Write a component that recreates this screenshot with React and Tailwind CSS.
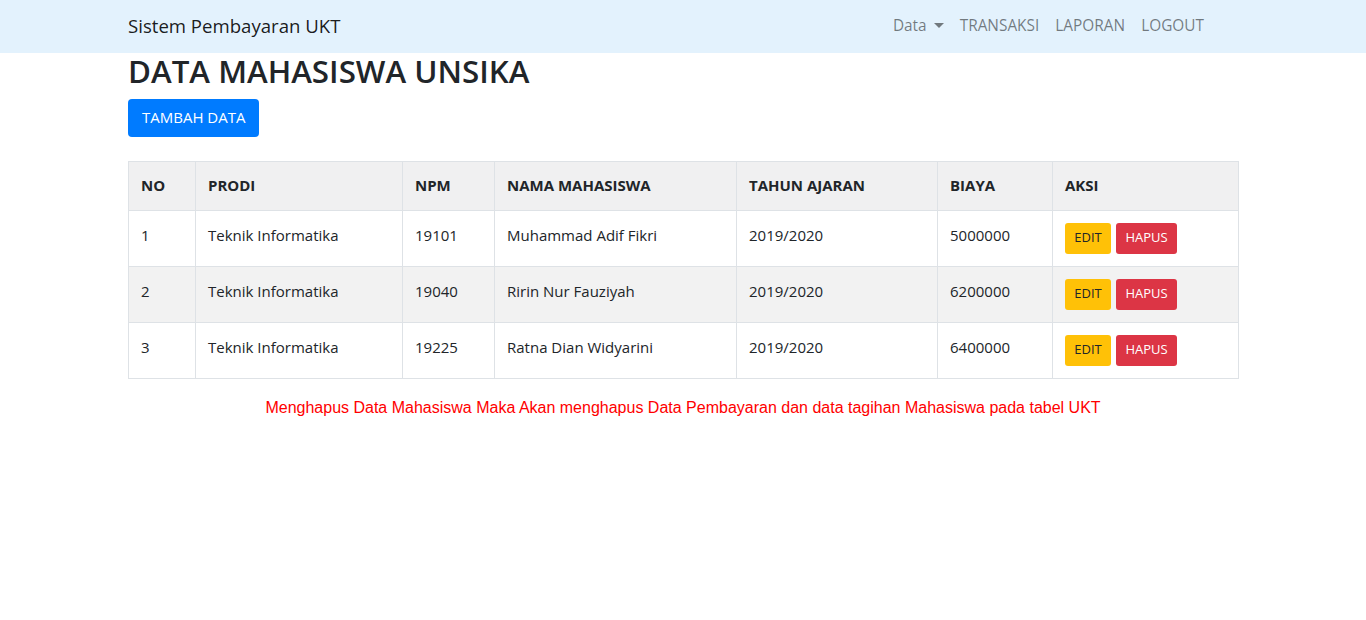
import React from "react";

const rows = [
  ["1", "Teknik Informatika", "19101", "Muhammad Adif Fikri", "2019/2020", "5000000"],
  ["2", "Teknik Informatika", "19040", "Ririn Nur Fauziyah", "2019/2020", "6200000"],
  ["3", "Teknik Informatika", "19225", "Ratna Dian Widyarini", "2019/2020", "6400000"],
];

const heads = ["NO", "PRODI", "NPM", "NAMA MAHASISWA", "TAHUN AJARAN", "BIAYA", "AKSI"];
const widths = [67, 207, 92, 242, 201, 115, 186];

export default function App() {
  return (
    <div className="min-h-[620px] bg-white text-[#212529]" style={{ fontFamily: '"Open Sans", "Noto Sans", sans-serif' }}>
      <nav className="bg-[#e3f2fd] h-[53px]">
        <div className="w-[1110px] mx-auto h-full flex items-center justify-between">
          <span className="text-[18.6px] text-[rgba(0,0,0,0.9)] -mt-[1px]">Sistem Pembayaran UKT</span>
          <div className="flex items-center mr-[26px] text-[15.4px] text-[rgba(0,0,0,0.5)] -mt-[1px]">
            <span className="px-2 flex items-center">
              Data
              <span className="ml-[7px] inline-block w-0 h-0 border-l-[5px] border-r-[5px] border-t-[5px] border-l-transparent border-r-transparent border-t-[rgba(0,0,0,0.5)]" />
            </span>
            <span className="px-2">TRANSAKSI</span>
            <span className="px-2">LAPORAN</span>
            <span className="px-2">LOGOUT</span>
          </div>
        </div>
      </nav>
      <div className="w-[1110px] mx-auto">
        <h2 className="text-[31.3px] font-semibold leading-[1.2] mt-0 mb-[8px]">DATA MAHASISWA UNSIKA</h2>
        <button className="h-[38px] px-[14px] bg-[#007bff] text-white text-[15px] rounded-[4px]">TAMBAH DATA</button>
        <table className="mt-[24px] w-[1110px] table-fixed border-collapse text-[15px]">
          <colgroup>
            {widths.map((w, i) => (
              <col key={i} style={{ width: w }} />
            ))}
          </colgroup>
          <thead>
            <tr className="bg-[#f0f0f1] h-[49px]">
              {heads.map((h) => (
                <th key={h} className="border border-[#dee2e6] px-[12px] text-left font-bold align-middle">
                  {h}
                </th>
              ))}
            </tr>
          </thead>
          <tbody>
            {rows.map((r, i) => (
              <tr key={i} className={i % 2 === 1 ? "bg-[#f2f2f2] h-[56px]" : "bg-white h-[56px]"}>
                {r.map((c, j) => (
                  <td key={j} className="border border-[#dee2e6] px-[12px] pt-[12px] pb-[12px] align-top leading-[24px]">
                    {c}
                  </td>
                ))}
                <td className="border border-[#dee2e6] px-[12px] py-[12px] align-top">
                  <div className="flex gap-[5px]">
                    <span className="h-[31px] w-[46px] flex items-center justify-center bg-[#ffc107] text-[#212529] text-[13px] rounded-[3px]">EDIT</span>
                    <span className="h-[31px] w-[61px] flex items-center justify-center bg-[#dc3545] text-white text-[13px] rounded-[3px]">HAPUS</span>
                  </div>
                </td>
              </tr>
            ))}
          </tbody>
        </table>
        <p className="mt-[17px] text-center text-[16px] text-[#ff0000]" style={{ fontFamily: '"Liberation Sans", Arial, sans-serif' }}>
          Menghapus Data Mahasiswa Maka Akan menghapus Data Pembayaran dan data tagihan Mahasiswa pada tabel UKT
        </p>
      </div>
    </div>
  );
}
